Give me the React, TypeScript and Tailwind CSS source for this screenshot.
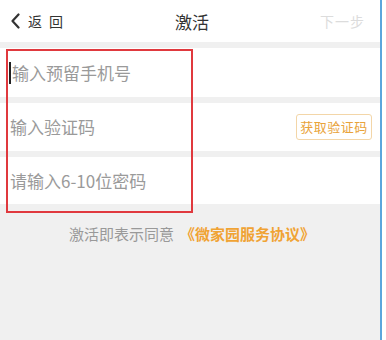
import React from 'react';

const font = { fontFamily: '"Noto Sans CJK SC", "Noto Sans", sans-serif' };

export default function App() {
  return (
    <div className="flex w-[386px] h-[340px] bg-white" style={font}>
      <div className="flex flex-col w-[382px] h-full bg-[#f0f0f0] border-r-2 border-[#5aa6dd]">
        {/* header */}
        <div className="relative flex items-center justify-between h-[42px] bg-white px-[10px]">
          <div className="flex items-center gap-[7px] text-[#333]">
            <svg width="11" height="16" viewBox="0 0 11 16" fill="none">
              <path d="M8.5 1.5 L2.5 8 L8.5 14.5" stroke="#333" strokeWidth="2.2" strokeLinecap="round" strokeLinejoin="round" />
            </svg>
            <span className="text-[14px] tracking-[7px] leading-none">返回</span>
          </div>
          <span className="text-[17px] text-[#333] leading-none absolute left-[175px]">激活</span>
          <span className="text-[14px] text-[#dcdcdc] tracking-[1px] leading-none mr-[5px]">下一步</span>
        </div>

        <div className="mt-[6px] flex flex-col gap-[6px] relative">
          <div className="flex items-center h-[49px] bg-white pl-[10px]">
            <span className="w-[2px] h-[22px] bg-[#222] mr-[1px] -ml-[1px]" />
            <span className="text-[17px] text-[#9a9a9a]">输入预留手机号</span>
          </div>
          <div className="flex items-center justify-between h-[48px] bg-white pl-[10px] pr-[8px]">
            <span className="text-[17px] text-[#9a9a9a]">输入验证码</span>
            <span className="flex items-center justify-center w-[76px] h-[26px] border border-[#f3d6a8] rounded-[3px] text-[13px] text-[#e9a33a] tracking-[0.5px]">
              获取验证码
            </span>
          </div>
          <div className="flex items-center h-[47px] bg-white pl-[10px]">
            <span className="text-[17px] text-[#9a9a9a]">请输入6-10位密码</span>
          </div>
          <div className="absolute left-[6px] top-[1px] w-[187px] h-[164px] border-2 border-[#e0393e]" />
        </div>

        <div className="mt-[22px] flex justify-center text-[15px] leading-none pl-[4px]">
          <span className="text-[#999]">激活即表示同意</span>
          <span className="ml-[6px] text-[#f0a334] font-bold">《微家园服务协议》</span>
        </div>
      </div>
    </div>
  );
}
